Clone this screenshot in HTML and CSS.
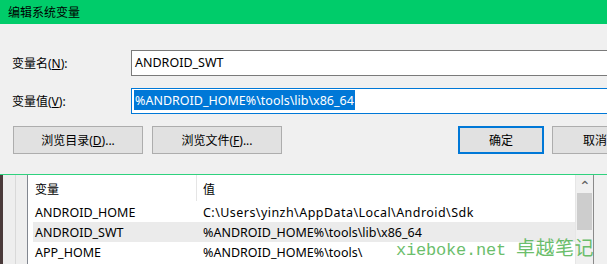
FILE: index.html
```html
<!DOCTYPE html>
<html lang="zh-CN">
<head>
  <meta charset="UTF-8">
  <title>编辑系统变量</title>
  <link rel="stylesheet" href="styles.css">
</head>
<body>

<div class="titlebar">编辑系统变量</div>

<div class="dialog">
  <div class="field">
    <label>变量名(<u>N</u>):</label>
    <div class="input">ANDROID_SWT</div>
  </div>
  <div class="field">
    <label>变量值(<u>V</u>):</label>
    <div class="input focused"><span class="sel">%ANDROID_HOME%\tools\lib\x86_64</span></div>
  </div>
  <div class="buttons">
    <button class="btn wide">浏览目录(<u>D</u>)...</button>
    <button class="btn wide">浏览文件(<u>F</u>)...</button>
    <span class="spacer"></span>
    <button class="btn default">确定</button>
    <button class="btn">取消</button>
  </div>
</div>

<div class="envwin">
  <div class="edge-dark"></div>
  <div class="edge"><div class="edge-line"></div></div>
  <div class="list">
    <div class="list-head">
      <div class="col-name">变量</div>
      <div class="col-value">值</div>
    </div>
    <div class="row"><div>ANDROID_HOME</div><div class="path">C:\Users\yinzh\AppData\Local\Android\Sdk</div></div>
    <div class="row hover"><div>ANDROID_SWT</div><div>%ANDROID_HOME%\tools\lib\x86_64</div></div>
    <div class="row"><div>APP_HOME</div><div>%ANDROID_HOME%\tools\</div></div>
  </div>
  <div class="scrollbar">
    <div class="arrow">&#8963;</div>
    <div class="thumb"></div>
  </div>
  <div class="edge-right"></div>
  <div class="watermark"><span class="wm-latin">xieboke.net</span><span class="wm-cjk">卓越笔记</span></div>
</div>

</body>
</html>
```

FILE: styles.css
```css
body {
  margin: 0;
  width: 607px;
  height: 264px;
  overflow: hidden;
  background: #f0f0f0;
  font-family: "Noto Sans", "Noto Sans CJK SC", sans-serif;
  font-size: 12px;
  color: #000;
}
u {
  text-decoration: underline;
  text-underline-offset: 1px;
}

.titlebar {
  height: 24px;
  line-height: 23px;
  padding-left: 8px;
  background: #00cc6a;
  font-family: "Noto Sans CJK SC", sans-serif;
}

.dialog {
  height: 150px;
  padding: 26px 0 0 12px;
  box-sizing: border-box;
}
.field {
  display: flex;
  align-items: center;
  margin-bottom: 12px;
  margin-right: -20px; /* box runs off the right edge */
}
.field label {
  width: 119px;
  flex: none;
}
.input {
  flex: 1;
  height: 26px;
  box-sizing: border-box;
  border: 1px solid #7a7a7a;
  background: #fff;
  padding: 0 3px;
  line-height: 23px;
  font-size: 12.5px;
  white-space: nowrap;
}
.input.focused {
  border-color: #0078d7;
  padding-left: 2px;
}
.sel {
  background: #0078d7;
  color: #fff;
  padding: 2px 1px 1px;
}

.buttons {
  display: flex;
  margin: 5px -31px 0 1px;
  gap: 9px;
}
.btn {
  width: 86px;
  height: 28px;
  border: 1px solid #adadad;
  background: #e1e1e1;
  font: inherit;
  padding: 0;
  flex: none;
}
.btn.wide {
  width: 130px;
}
.btn.default {
  border: 2px solid #0078d7;
  margin-right: -1px;
}
.spacer {
  flex: 1;
}

.envwin {
  position: relative;
  display: flex;
  height: 89px;
  border-top: 1px solid #2fd27e;
  overflow: hidden;
}
.edge-dark {
  width: 3px;
  background: #4a3a3a;
}
.edge {
  width: 24px;
  background: #eeeeee;
}
.edge-line {
  width: 12px;
  height: 100%;
  border-right: 1px solid #d9d9d9;
}
.list {
  width: 547px;
  border-left: 1px solid #828790;
  border-right: 1px solid #e6e6e6;
  background: #fff;
  font-size: 12.5px;
}
.list-head {
  display: flex;
  height: 26px;
  align-items: stretch;
  margin-left: 7px;
  margin-bottom: 1px;
  font-family: "Noto Sans CJK SC", sans-serif;
  font-size: 12px;
}
.col-name {
  width: 161px;
  border-right: 1px solid #e5e5e5;
  line-height: 28px;
}
.col-value {
  padding-left: 6px;
  line-height: 28px;
}
.row {
  display: grid;
  grid-template-columns: 168px 1fr;
  height: 20px;
  line-height: 21px;
  margin-left: 5px;
  padding-left: 2px;
  white-space: nowrap;
}
.row.hover {
  background: #ebebeb;
}
.path {
  letter-spacing: 0.45px;
}

.scrollbar {
  width: 17px;
  background: #f0f0f0;
  border-right: 1px solid #8a8a8a;
}
.arrow {
  height: 18px;
  text-align: center;
  line-height: 22px;
  font-size: 14px;
  color: #606060;
}
.thumb {
  height: 37px;
  margin: 0 1px;
  background: #cdcdcd;
}
.edge-right {
  flex: 1;
  background: #f0f0f0;
}

.watermark {
  position: absolute;
  left: 396px;
  top: 58px;
  display: flex;
  align-items: baseline;
  color: #5cb85c;
  opacity: 0.9;
  white-space: nowrap;
}
.wm-latin {
  width: 120px;
  font-family: "Liberation Mono", monospace;
  font-size: 17px;
  letter-spacing: -0.2px;
}
.wm-cjk {
  font-family: "Noto Sans CJK SC", sans-serif;
  font-size: 19px;
  letter-spacing: 0.5px;
}
```
